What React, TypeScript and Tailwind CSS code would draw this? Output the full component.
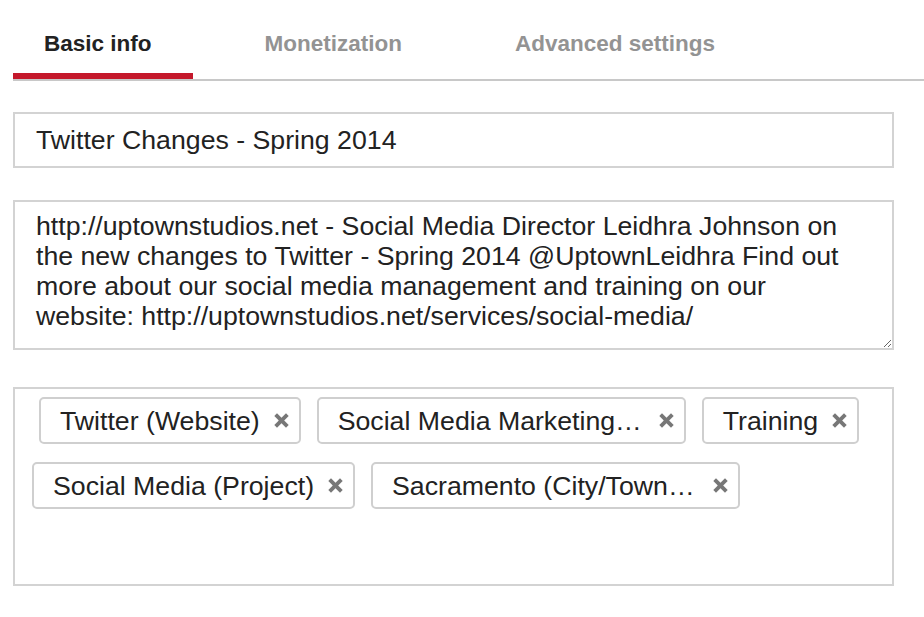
import React from "react";

const tabs = ["Basic info", "Monetization", "Advanced settings"];

const tags: { label: string; clipped?: boolean }[] = [
  { label: "Twitter (Website)" },
  { label: "Social Media Marketing…", clipped: true },
  { label: "Training" },
  { label: "Social Media (Project)" },
  { label: "Sacramento (City/Town…", clipped: true },
];

const description =
  "http://uptownstudios.net - Social Media Director Leidhra Johnson on the new changes to Twitter - Spring 2014 @UptownLeidhra Find out more about our social media management and training on our website: http://uptownstudios.net/services/social-media/";

function RemoveIcon() {
  return (
    <svg width="17" height="17" viewBox="0 0 16 16" fill="none" stroke="#777" strokeWidth="3.6">
      <line x1="2.5" y1="2.5" x2="13.5" y2="13.5" />
      <line x1="13.5" y1="2.5" x2="2.5" y2="13.5" />
    </svg>
  );
}

function Tag({ label, clipped, first }: { label: string; clipped?: boolean; first?: boolean }) {
  return (
    <div
      className={`flex h-[47px] items-center gap-[13px] rounded-[5px] border-2 border-[#cfcfcf] pl-[19px] pr-[9px] ${
        first ? "ml-[7px]" : ""
      }`}
    >
      <span
        className={`whitespace-nowrap text-[26.7px] leading-[30px] text-[#222] ${clipped ? "w-[307px]" : ""}`}
      >
        {label}
      </span>
      <RemoveIcon />
    </div>
  );
}

export default function App() {
  return (
    <div className="h-[617px] w-[924px] overflow-hidden bg-white font-['Liberation_Sans',Arial,sans-serif]">
      {/* Tabs */}
      <div className="ml-[13px] flex gap-[41px] border-b-2 border-[#c8c8c8]">
        {tabs.map((t, i) => (
          <div
            key={t}
            className={`pb-[16px] pl-[31px] pr-[41px] pt-[31px] text-[22.5px] font-bold leading-[26px] ${
              i === 0 ? "border-b-[6px] border-[#c4182b] text-[#222]" : "border-b-[6px] border-transparent text-[#939393]"
            }`}
          >
            {t}
          </div>
        ))}
      </div>

      <div className="mx-[13px] flex w-[881px] flex-col">
        {/* Title */}
        <div className="mt-[31px] flex h-[56px] items-center border-2 border-[#d3d3d3] px-[21px] text-[26.7px] leading-[30px] text-[#222]">
          Twitter Changes - Spring 2014
        </div>

        {/* Description */}
        <textarea
          readOnly
          defaultValue={description}
          className="mt-[32px] h-[150px] w-full resize-y border-2 border-[#d3d3d3] px-[21px] pt-[9px] text-[26.7px] leading-[30px] text-[#222] outline-none"
        />

        {/* Tags */}
        <div className="mt-[37px] flex h-[199px] flex-wrap content-start gap-x-[16px] gap-y-[18px] border-2 border-[#d3d3d3] pl-[17px] pt-[8px]">
          {tags.map((t, i) => (
            <Tag key={t.label} label={t.label} clipped={t.clipped} first={i === 0} />
          ))}
        </div>
      </div>
    </div>
  );
}
